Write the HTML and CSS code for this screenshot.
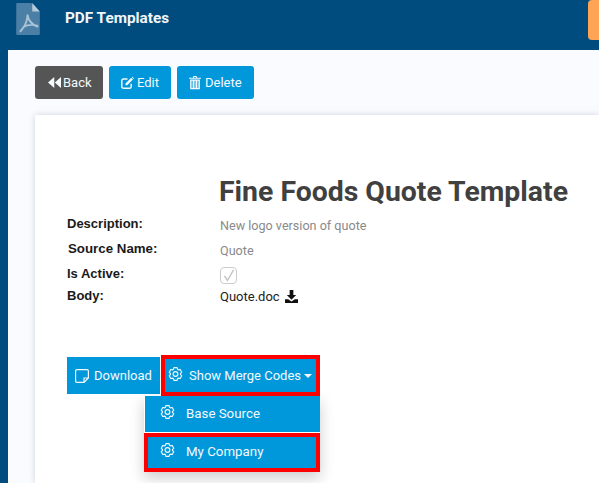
FILE: index.html
```html
<!DOCTYPE html>
<html lang="en">
<head>
<meta charset="utf-8">
<title>PDF Templates</title>
<link rel="stylesheet" href="styles.css">
</head>
<body>
<svg class="defs" width="0" height="0" aria-hidden="true">
  <defs>
    <symbol id="gear" viewBox="0 0 24 24">
      <path fill="none" stroke="currentColor" stroke-width="1.800" stroke-linejoin="round" d="M8.490 4.810L9.460 1.810H14.540L15.510 4.810L16.470 5.370L19.550 4.700L22.090 9.110L19.980 11.440V12.560L22.090 14.890L19.550 19.300L16.470 18.630L15.510 19.190L14.540 22.190H9.460L8.490 19.190L7.530 18.630L4.450 19.300L1.910 14.890L4.020 12.560V11.440L1.910 9.110L4.450 4.700L7.530 5.370Z"/>
      <circle cx="12" cy="12" r="3.800" fill="none" stroke="currentColor" stroke-width="1.800"/>
    </symbol>
  </defs>
</svg>
<header class="topbar">
  <svg class="pdf-icon" viewBox="0 0 26 36" aria-hidden="true">
    <path class="pdf-sheet" d="M1 1h15l9 9v24a1 1 0 0 1-1 1H1a1 1 0 0 1-1-1V2a1 1 0 0 1 1-1z"/>
    <path class="pdf-fold" d="M17 1l8 9h-8z"/>
    <path class="pdf-mark" d="M12 14C11.500 20 8.500 27 4.500 31M12 14C13 20 17 24 22.500 26M7.500 26.500C11 24.500 16 23.500 22.500 25"/>
  </svg>
  <h1 class="page-title">PDF Templates</h1>
  <span class="tab-orange"></span>
</header>
<main class="content">
  <nav class="actions">
    <a class="btn btn-dark">
      <svg class="ico-back" viewBox="1 1 14.500 12" aria-hidden="true"><path fill="currentColor" d="M8 1v12L1 7zM15.500 1v12L8.600 7z"/></svg>Back
    </a>
    <a class="btn btn-blue">
      <svg class="ico-edit" viewBox="0 0 16 16" aria-hidden="true"><path fill="none" stroke="currentColor" stroke-width="1.800" d="M12.500 9v3.500a2 2 0 0 1-2 2H3a2 2 0 0 1-2-2V5a2 2 0 0 1 2-2h5"/><path fill="currentColor" d="M5.500 8.500L12.500 1.500l2.200 2.200-7 7H5.500zM13.200.8l.8-.6 2 2-.6.800z"/></svg>Edit
    </a>
    <a class="btn btn-blue">
      <svg class="ico-trash" viewBox="0 0 14 16" aria-hidden="true"><path fill="currentColor" d="M0 2.500h4.500L5.200.5h3.600l.7 2H14v1.200H0zM6 1.500l-.3 1h2.600l-.3-1zM1.300 4.500h11.400V15a1 1 0 0 1-1 1H2.300a1 1 0 0 1-1-1zm1.700 1.500v8.500h1.200V6zm3.400 0v8.500h1.200V6zm3.400 0v8.500H11V6z"/></svg>Delete
    </a>
  </nav>
  <section class="card">
    <h2 class="card-title">Fine Foods Quote Template</h2>
    <dl class="details">
      <dt class="label">Description:</dt>
      <dd class="value">New logo version of quote</dd>
      <dt class="label label-source">Source Name:</dt>
      <dd class="value">Quote</dd>
      <dt class="label">Is Active:</dt>
      <dd class="value"><span class="check"><svg viewBox="0 0 12 13" aria-hidden="true"><path fill="none" stroke="#c4c4c4" stroke-width="1.400" d="M1.500 7L4.500 11.500 10.500 .8"/></svg></span></dd>
      <dt class="label">Body:</dt>
      <dd class="value value-file">Quote.doc
        <svg class="ico-dl" viewBox="0 0 14 14" aria-hidden="true"><path fill="currentColor" d="M5 0h4v5.500h3L7 10.500 2 5.500h3zM0 10h3.500L7 12.500 10.500 10H14v4H0z"/></svg>
      </dd>
    </dl>
    <div class="toolbar">
      <a class="tool tool-download">
        <svg class="ico-note" viewBox="0 0 14 14" aria-hidden="true"><path fill="none" stroke="currentColor" stroke-width="1.200" d="M9 13.400H2a1.400 1.400 0 0 1-1.400-1.400V2A1.400 1.400 0 0 1 2 .6h10A1.400 1.400 0 0 1 13.400 2v7L9 13.400V9h4.400"/></svg>Download
      </a>
      <div class="merge">
        <a class="tool tool-merge">
          <svg class="ico-gear"><use href="#gear"/></svg>Show Merge Codes<span class="caret"></span>
        </a>
        <ul class="menu">
          <li class="menu-item"><svg class="ico-gear"><use href="#gear"/></svg>Base Source</li>
          <li class="menu-item menu-item-marked"><svg class="ico-gear"><use href="#gear"/></svg>My Company</li>
        </ul>
      </div>
    </div>
  </section>
</main>
</body>
</html>
```
FILE: styles.css
```css
* { box-sizing: border-box; }
html, body { margin: 0; height: 483px; overflow: hidden; }
body { background: #004c7f; font-family: Roboto, "Liberation Sans", sans-serif; }
.defs { position: absolute; }

.topbar { height: 50px; display: flex; align-items: flex-start; overflow: hidden; padding-left: 16px; }
.pdf-icon { width: 25px; height: 34px; margin-top: 2px; flex: none; }
.pdf-sheet { fill: #4b7fa6; }
.pdf-fold { fill: #b4cbdc; }
.pdf-mark { fill: none; stroke: #a9c3d6; stroke-width: 2; stroke-linecap: round; }
.page-title { margin: 9px 0 0 24px; font-size: 15.300px; line-height: 18px; font-weight: 700; color: #f2f6f9; }
.tab-orange { width: 30px; height: 40px; margin-left: auto; margin-right: -19px; background: #fda555; border-radius: 4px; }

.content { margin-left: 8px; height: 433px; background: #fafbff; padding: 16px 0 0 27px; }
.actions { display: flex; gap: 6px; height: 33px; }
.btn { display: flex; align-items: center; height: 33px; border-radius: 3px; color: #f4f9fc; font-size: 13px; }
.btn-dark { width: 68px; background: #555555; padding-left: 13px; }
.btn-blue { background: #0098db; padding: 0 12px; }
.ico-back { width: 13px; height: 11px; margin-right: 2px; }
.ico-edit { width: 13px; height: 14px; margin-right: 3px; }
.ico-trash { width: 12px; height: 15px; margin-right: 4px; }

.card { margin-top: 16px; height: 368px; background: #ffffff; box-shadow: 0 0 6px rgba(60, 70, 110, .22); padding: 60px 0 0 32px; }
.card-title { margin: 0 0 0 152px; font-size: 28.400px; line-height: 34px; font-weight: 700; color: #404040; white-space: nowrap; }
.details { display: grid; grid-template-columns: 153px 1fr; grid-template-rows: 25px 25px 22px 22px; margin: 6px 0 0; }
.label { font-family: "Liberation Sans", sans-serif; font-weight: 700; font-size: 13px; line-height: 18px; color: #1a1a1a; margin: 0; }
.label-source { padding-left: 1px; font-size: 13.300px; }
.value { margin: 2px 0 0; font-size: 12.600px; line-height: 18px; color: #8a8a8a; }
.value-file { color: #222222; font-size: 13px; display: flex; align-items: center; gap: 5px; margin-top: 1px; height: 18px; }
.check { display: block; width: 17px; height: 17px; border: 1px solid #cccccc; border-radius: 4px; padding: 1px 2px; background: #fff; }
.check svg { display: block; width: 12px; height: 13px; }
.ico-dl { width: 13px; height: 13px; margin-top: -2px; color: #111; }

.toolbar { display: flex; align-items: flex-start; margin-top: 48px; }
.tool { display: flex; align-items: center; color: #f4f9fc; background: #0098db; font-size: 13px; white-space: nowrap; }
.tool-download { width: 93px; height: 37px; padding-left: 8px; }
.ico-note { width: 14px; height: 14px; margin-right: 5px; }
.merge { position: relative; margin: -2px 0 0 1px; }
.tool-merge { width: 159px; height: 41px; border: 4px solid #ff0000; padding-left: 3px; }
.ico-gear { width: 15px; height: 16px; margin-right: 6px; margin-top: -3px; color: #f4f9fc; flex: none; }
.caret { width: 0; height: 0; margin-left: 3px; border: 4px solid transparent; border-top-color: #f4f9fc; border-bottom: 0; }
.menu { position: absolute; left: -17px; top: 41px; width: 176px; margin: 0; padding: 0; list-style: none; box-shadow: 0 6px 14px rgba(0, 0, 0, .2); background: #fff; }
.menu-item { display: flex; align-items: center; height: 36px; margin-left: 1px; padding: 0 0 2px 15px; background: #0098db; color: #f4f9fc; font-size: 13.300px; }
.menu-item .ico-gear { margin-right: 11px; margin-top: -3px; }
.menu-item-marked { height: 39px; margin: 1px 0 0; border: 4px solid #ff0000; padding-left: 12px; }
```
